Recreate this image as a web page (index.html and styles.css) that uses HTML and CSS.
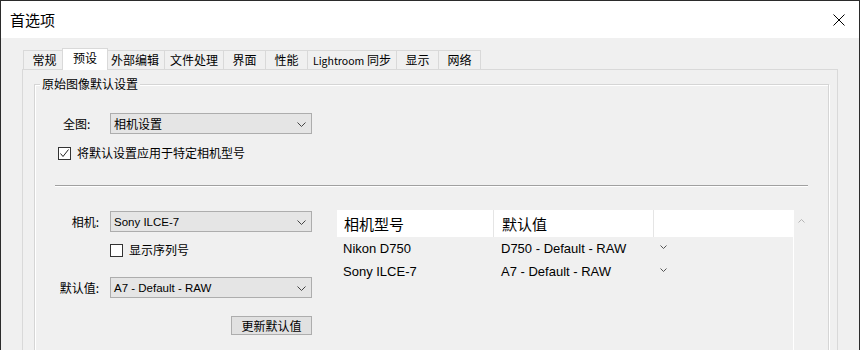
FILE: index.html
```html
<!DOCTYPE html>
<html lang="zh-CN">
<head>
    <meta charset="UTF-8">
    <title>首选项</title>
    <link rel="stylesheet" href="styles.css">
</head>
<body>
    <div class="window">
        <div class="titlebar">
            <span class="title">首选项</span>
            <span class="close">
                <svg width="12" height="12" viewBox="0 0 12 12"><path d="M0.5 0.5L11.5 11.5M11.5 0.5L0.5 11.5" stroke="#000" stroke-width="1" fill="none"/></svg>
            </span>
        </div>
        <div class="main">
            <div class="tabs">
                <div class="tab">常规</div>
                <div class="tab active">预设</div>
                <div class="tab">外部编辑</div>
                <div class="tab">文件处理</div>
                <div class="tab">界面</div>
                <div class="tab">性能</div>
                <div class="tab"><span class="latin">Lightroom</span> 同步</div>
                <div class="tab">显示</div>
                <div class="tab">网络</div>
            </div>
            <div class="panel">
                <div class="group">
                    <span class="group-title">原始图像默认设置</span>

                    <div class="global-row">
                        <span class="global-label">全图:</span>
                        <div class="select">
                            <span>相机设置</span>
                            <svg class="arrow" width="9" height="5" viewBox="0 0 9 5"><path d="M0.5 0.5L4.5 4.5L8.5 0.5" stroke="#444" fill="none"/></svg>
                        </div>
                    </div>

                    <label class="check check-specific">
                        <span class="box"><svg width="11" height="11" viewBox="0 0 11 11"><path d="M1.5 5.5L4 8.5L9.5 1.5" stroke="#222" fill="none"/></svg></span>
                        将默认设置应用于特定相机型号
                    </label>

                    <div class="separator"></div>

                    <div class="camera-section">
                        <div class="camera-form">
                            <span class="form-label">相机:</span>
                            <div class="select select-camera">
                                <span class="latin-small">Sony ILCE-7</span>
                                <svg class="arrow" width="9" height="5" viewBox="0 0 9 5"><path d="M0.5 0.5L4.5 4.5L8.5 0.5" stroke="#444" fill="none"/></svg>
                            </div>

                            <label class="check check-serial">
                                <span class="box"></span>
                                显示序列号
                            </label>

                            <span class="form-label label-default">默认值:</span>
                            <div class="select select-default">
                                <span class="latin-small">A7 - Default - RAW</span>
                                <svg class="arrow" width="9" height="5" viewBox="0 0 9 5"><path d="M0.5 0.5L4.5 4.5L8.5 0.5" stroke="#444" fill="none"/></svg>
                            </div>

                            <button class="update-btn">更新默认值</button>
                        </div>

                        <div class="list">
                            <div class="list-body">
                                <div class="list-head">
                                    <div class="cell">相机型号</div>
                                    <div class="cell">默认值</div>
                                    <div class="cell"></div>
                                </div>
                                <div class="list-row">
                                    <div class="cell">Nikon D750</div>
                                    <div class="cell">D750 - Default - RAW</div>
                                    <div class="cell"><svg class="row-arrow" width="7" height="4" viewBox="0 0 7 4"><path d="M0.5 0.5L3.5 3.5L6.5 0.5" stroke="#555" fill="none"/></svg></div>
                                </div>
                                <div class="list-row">
                                    <div class="cell">Sony ILCE-7</div>
                                    <div class="cell">A7 - Default - RAW</div>
                                    <div class="cell"><svg class="row-arrow" width="7" height="4" viewBox="0 0 7 4"><path d="M0.5 0.5L3.5 3.5L6.5 0.5" stroke="#555" fill="none"/></svg></div>
                                </div>
                            </div>
                            <div class="scrollbar">
                                <svg width="7" height="4" viewBox="0 0 7 4"><path d="M0.5 3.5L3.5 0.5L6.5 3.5" stroke="#b5b5b5" fill="none"/></svg>
                            </div>
                        </div>
                    </div>
                </div>
            </div>
        </div>
    </div>
</body>
</html>
```

FILE: styles.css
```css
* {
    box-sizing: border-box;
    margin: 0;
    padding: 0;
}

body {
    width: 860px;
    height: 350px;
    overflow: hidden;
    background-color: #f0f0f0;
    font-family: "Noto Sans CJK SC", "Noto Sans", sans-serif;
    font-size: 12px;
    color: #000;
}

.window {
    width: 860px;
    height: 350px;
    border: 1px solid #2b2b2b;
    border-bottom: none;
    background-color: #f0f0f0;
    overflow: hidden;
}

/* Title bar */
.titlebar {
    height: 37px;
    background-color: #fff;
    display: flex;
    justify-content: space-between;
    align-items: center;
    padding: 0 14px 0 9px;
}

.title {
    font-size: 15px;
    line-height: 20px;
}

.close {
    display: flex;
    width: 12px;
    height: 12px;
    margin-top: 1px;
}

/* Tabs */
.main {
    padding: 10px 21px 0 21px;
}

.tabs {
    display: flex;
    align-items: flex-end;
    height: 21px;
    margin-left: 1px;
    position: relative;
    z-index: 1;
}

.tab {
    height: 19px;
    min-width: 43px;
    padding: 0 5px;
    margin-right: -1px;
    border: 1px solid #d9d9d9;
    border-bottom: none;
    background-color: #f0f0f0;
    text-align: center;
    line-height: 17px;
    white-space: nowrap;
}

.tab .latin {
    font-size: 10.5px;
}

.tab.active {
    height: 22px;
    margin: 0 -3px -1px -3px;
    padding: 0 6px;
    min-width: 46px;
    background-color: #fff;
    line-height: 18px;
    position: relative;
    z-index: 2;
}

.panel {
    height: 300px;
    border: 1px solid #d9d9d9;
    background-color: #f0f0f0;
    padding: 14px 8px 0 11px;
}

/* Group box */
.group {
    position: relative;
    height: 320px;
    border: 1px solid #d5d5d5;
    box-shadow: inset 1px 1px 0 #fff, 1px 1px 0 #fff;
    padding: 28px 20px 0 20px;
}

.group-title {
    position: absolute;
    top: -9px;
    left: 5px;
    padding: 0 2px;
    line-height: 16px;
    background-color: #f0f0f0;
}

.global-row {
    display: flex;
    align-items: center;
    padding-left: 8px;
}

.global-label {
    width: 47px;
}

.select {
    width: 202px;
    height: 21px;
    display: flex;
    justify-content: space-between;
    align-items: center;
    padding: 0 5px 0 3px;
    background-color: #e5e5e5;
    border: 1px solid #adadad;
}

.select .arrow {
    margin-top: 1px;
}

.latin-small {
    font-family: "Liberation Sans", Arial, sans-serif;
    font-size: 11.5px;
}

.check {
    display: flex;
    align-items: center;
    gap: 6px;
    height: 16px;
    line-height: 16px;
}

.box {
    width: 13px;
    height: 13px;
    border: 1px solid #333;
    background-color: #fff;
    display: flex;
    align-items: center;
    justify-content: center;
}

.check-specific {
    margin-top: 11px;
    padding-left: 3px;
}

.separator {
    margin-top: 24px;
    border-top: 1px solid #a0a0a0;
    border-bottom: 1px solid #fff;
}

/* Camera specific defaults */
.camera-section {
    display: flex;
    gap: 25px;
    margin-top: 23px;
}

.camera-form {
    width: 257px;
    display: grid;
    grid-template-columns: 44px 202px;
    column-gap: 11px;
    align-items: center;
    align-content: start;
}

.form-label {
    text-align: right;
}

.select-camera {
    margin-top: 1px;
}

.check-serial {
    grid-column: 2;
    margin-top: 10px;
}

.label-default,
.select-default {
    margin-top: 19px;
}

.update-btn {
    grid-column: 2;
    justify-self: end;
    width: 81px;
    height: 19px;
    margin-top: 18px;
    border: 1px solid #adadad;
    background-color: #e1e1e1;
    font-family: inherit;
    font-size: 12px;
    line-height: 16px;
}

.list {
    flex: 1;
    display: flex;
    height: 140px;
}

.list-body {
    flex: 1;
}

.list-head,
.list-row {
    display: grid;
    grid-template-columns: 157px 160px 1fr;
}

.list-head {
    height: 27px;
    background-color: #fff;
    font-size: 15px;
    line-height: 27px;
}

.list-head .cell:nth-child(1) {
    padding-left: 7px;
    border-right: 1px solid #e5e5e5;
}

.list-head .cell:nth-child(2) {
    padding-left: 8px;
    border-right: 1px solid #e5e5e5;
}

.list-row {
    height: 23px;
    line-height: 23px;
    font-family: "Liberation Sans", Arial, sans-serif;
    font-size: 13px;
}

.list-row .cell:nth-child(1) {
    padding-left: 6px;
}

.list-row .cell:nth-child(2) {
    padding-left: 7px;
}

.list-row .cell:nth-child(3) {
    padding-left: 6px;
}

.row-arrow {
    display: block;
    margin-top: 8px;
}

.scrollbar {
    width: 15px;
    border-left: 1px solid #fff;
    display: flex;
    justify-content: center;
    padding-top: 9px;
}
```
